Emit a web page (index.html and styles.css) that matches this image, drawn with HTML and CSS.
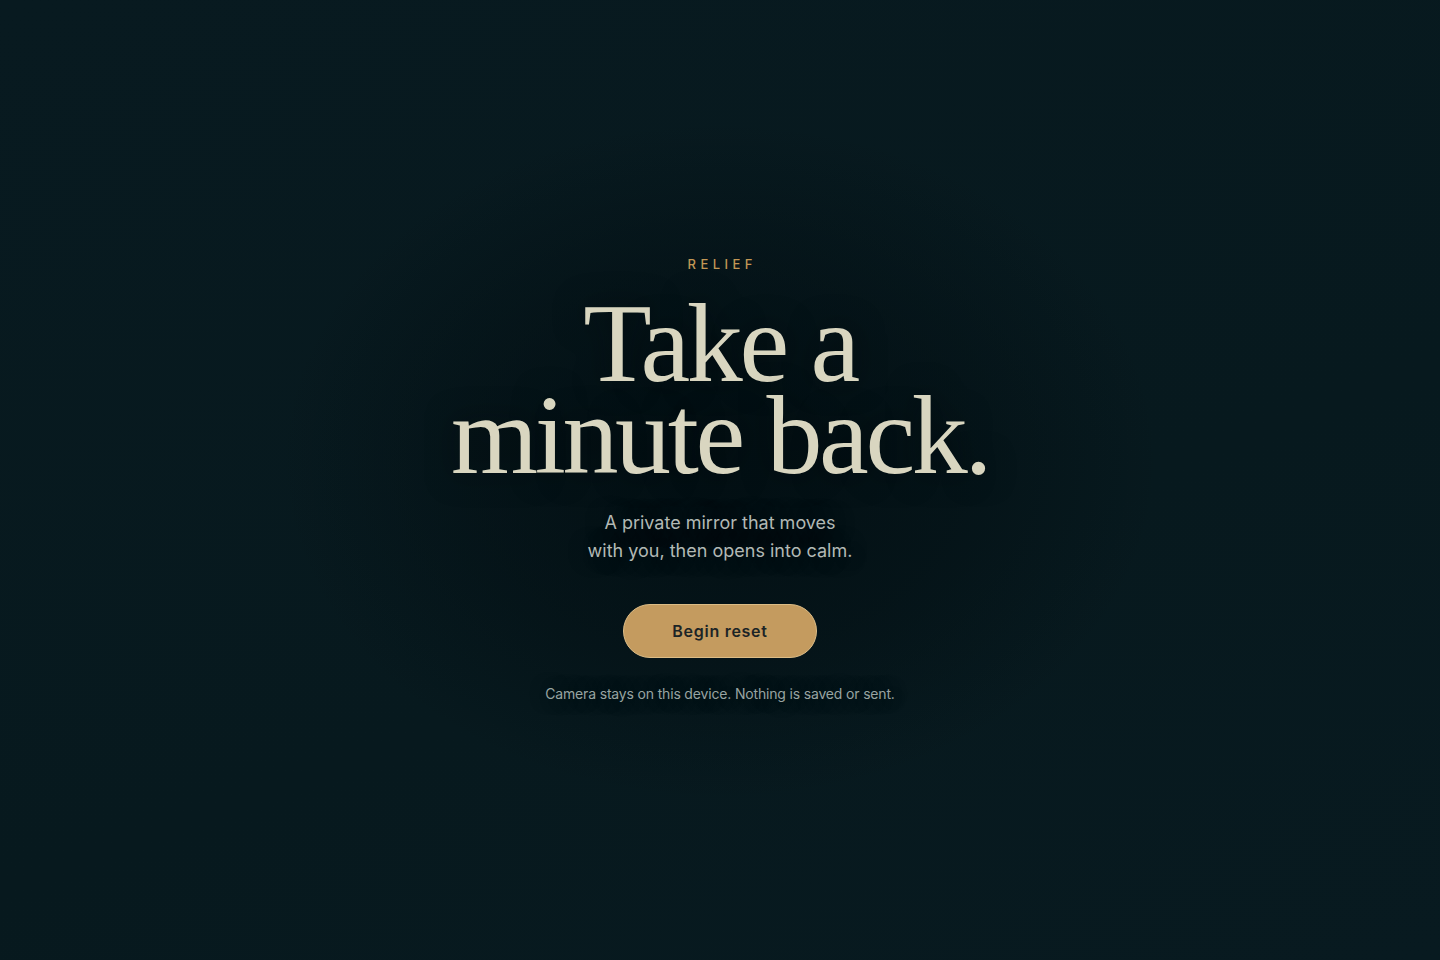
FILE: index.html
```html
<!DOCTYPE html>
<html lang="en">
<head>
<meta charset="utf-8">
<title>Relief</title>
<link rel="stylesheet" href="styles.css">
</head>
<body>
<main class="hero">
  <div class="eyebrow">RELIEF</div>
  <h1 class="title"><span class="title-line">Take a</span><span class="title-line">minute back.</span></h1>
  <p class="lede">A private mirror that moves<br>with you, then opens into calm.</p>
  <button class="cta" type="button">Begin reset</button>
  <p class="note">Camera stays on this device. Nothing is saved or sent.</p>
</main>
</body>
</html>
```

FILE: styles.css
```css
html, body {
  margin: 0;
  padding: 0;
  height: 100%;
}
body {
  background:
    radial-gradient(ellipse 440px 340px at 50% 48%, rgba(2, 13, 17, 0.8) 0%, rgba(2, 13, 17, 0.45) 55%, rgba(2, 13, 17, 0) 100%),
    linear-gradient(160deg, #081a20 0%, #07191e 60%, #081a20 100%);
  font-family: Inter, "Noto Sans", sans-serif;
  min-height: 960px;
  overflow: hidden;
}
.hero {
  min-height: 960px;
  display: flex;
  flex-direction: column;
  align-items: center;
  justify-content: center;
  text-align: center;
  box-sizing: border-box;
  padding-bottom: 2px;
}
.eyebrow {
  font-size: 13px;
  line-height: 18px;
  letter-spacing: 0.34em;
  margin-right: -0.34em;
  color: #c29755;
  font-weight: 500;
}
.title {
  margin: 24px 0 0;
  font-family: "Liberation Serif", "DejaVu Serif", serif;
  font-weight: 400;
  font-size: 112px;
  line-height: 92px;
  letter-spacing: -0.03em;
  color: #d9d6c0;
  text-shadow: 0 0 30px rgba(0, 8, 10, 0.6);
}
.title-line {
  display: block;
}
.lede {
  margin: 28px 0 0;
  font-size: 18px;
  line-height: 28px;
  color: #b2b9b5;
  text-shadow: 0 0 20px rgba(0, 8, 10, 0.7);
}
.cta {
  margin-top: 39px;
  font-family: Inter, "Noto Sans", sans-serif;
  font-size: 16px;
  line-height: 20px;
  font-weight: 600;
  letter-spacing: 0.045em;
  color: #1c2426;
  background: #c49b5f;
  border: 1px solid #dcbc86;
  border-radius: 999px;
  padding: 16px 48px;
  cursor: pointer;
}
.note {
  margin: 26px 0 0;
  font-size: 14px;
  line-height: 20px;
  letter-spacing: -0.012em;
  color: #98a4a2;
  text-shadow: 0 0 16px rgba(0, 8, 10, 0.7);
}
```
